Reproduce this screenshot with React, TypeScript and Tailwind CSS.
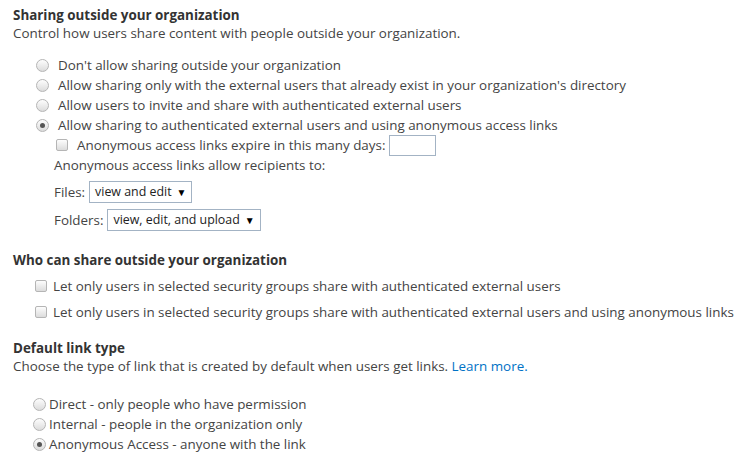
import React from "react";

function Radio({ checked }: { checked?: boolean }) {
  return (
    <span className="relative inline-flex h-[13px] w-[13px] shrink-0 items-center justify-center rounded-full border border-[#b5b5b5] bg-gradient-to-b from-[#fdfdfd] to-[#dcdcdc]">
      {checked && <span className="h-[5px] w-[5px] rounded-full bg-[#555]" />}
    </span>
  );
}

function Check() {
  return (
    <span className="inline-block h-[12px] w-[12px] shrink-0 rounded-[2px] border border-[#b5b5b5] bg-gradient-to-b from-[#fdfdfd] to-[#dcdcdc]" />
  );
}

function Select({ label }: { label: string }) {
  return (
    <span className="inline-flex h-[22px] items-center gap-[5px] whitespace-nowrap border border-[#a3b3c4] bg-white pl-[5px] pr-[5px] text-[12.4px] text-[#222]">
      <span>{label}</span>
      <span className="text-[10px] leading-none text-black">▼</span>
    </span>
  );
}

export default function App() {
  return (
    <div
      className="h-[472px] w-[755px] whitespace-nowrap bg-white pl-[13px] pt-[6px] text-[13.4px] text-[#444]"
      style={{ fontFamily: '"Open Sans", "Noto Sans", sans-serif' }}
    >
      <div className="font-bold leading-[18px] text-[#333]">Sharing outside your organization</div>
      <div className="leading-[18px]">Control how users share content with people outside your organization.</div>

      <div className="mt-[13px] pl-[23px]">
        {[
          "Don't allow sharing outside your organization",
          "Allow sharing only with the external users that already exist in your organization's directory",
          "Allow users to invite and share with authenticated external users",
          "Allow sharing to authenticated external users and using anonymous access links",
        ].map((t, i) => (
          <div key={i} className="flex h-[20px] items-center gap-[9px]">
            <Radio checked={i === 3} />
            <span>{t}</span>
          </div>
        ))}
      </div>

      <div className="pl-[43px]">
        <div className="flex h-[20px] items-center">
          <Check />
          <span className="ml-[9px]">Anonymous access links expire in this many days:</span>
          <span className="ml-[4px] inline-block h-[21px] w-[47px] border border-[#a3b3c4] bg-white" />
        </div>
      </div>
      <div className="pl-[41px]">
        <div className="flex h-[20px] items-center">Anonymous access links allow recipients to:</div>
        <div className="mt-[6px] flex h-[22px] items-center gap-[4px]">
          <span>Files:</span>
          <Select label="view and edit" />
        </div>
        <div className="mt-[6px] flex h-[22px] items-center gap-[4px]">
          <span>Folders:</span>
          <Select label="view, edit, and upload" />
        </div>
      </div>

      <div className="mt-[20px] font-bold leading-[18px] text-[#333]">Who can share outside your organization</div>
      <div className="mt-[7px] pl-[22px]">
        <div className="flex h-[20px] items-center gap-[6px]">
          <Check />
          <span>Let only users in selected security groups share with authenticated external users</span>
        </div>
        <div className="mt-[6px] flex h-[20px] items-center gap-[6px]">
          <Check />
          <span>Let only users in selected security groups share with authenticated external users and using anonymous links</span>
        </div>
      </div>

      <div className="mt-[17px] font-bold leading-[18px] text-[#333]">Default link type</div>
      <div className="leading-[18px]">
        Choose the type of link that is created by default when users get links.{" "}
        <span className="text-[#0072c6]">Learn more.</span>
      </div>
      <div className="mt-[19px] pl-[20px]">
        {[
          "Direct - only people who have permission",
          "Internal - people in the organization only",
          "Anonymous Access - anyone with the link",
        ].map((t, i) => (
          <div key={i} className="flex h-[20px] items-center gap-[3px]">
            <Radio checked={i === 2} />
            <span>{t}</span>
          </div>
        ))}
      </div>
    </div>
  );
}
